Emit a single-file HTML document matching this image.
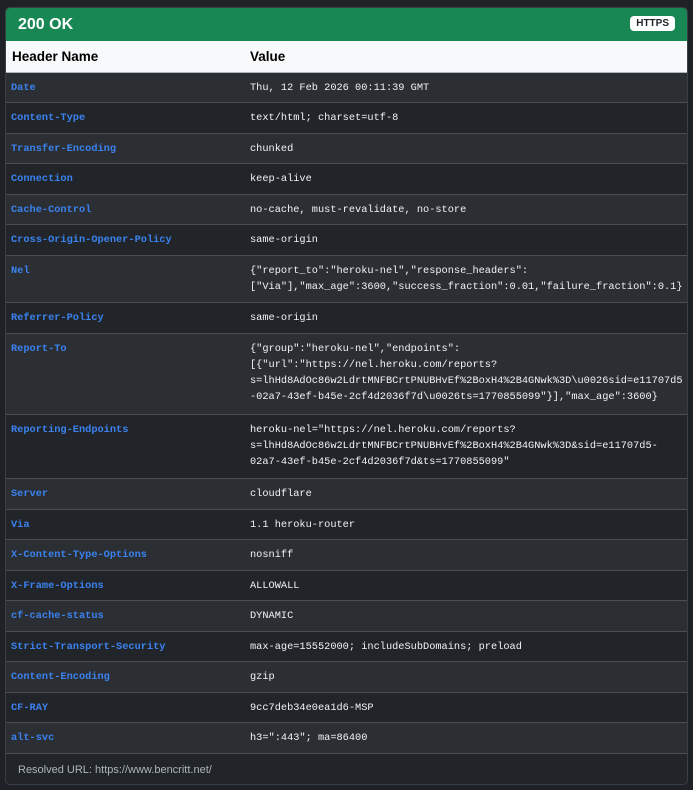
<!DOCTYPE html>
<html><head><meta charset="utf-8"><style>
body{margin:0;background:#1e2125;width:693px;height:790px;overflow:hidden;font-family:"Liberation Sans",sans-serif}
.card{position:absolute;left:5px;top:7px;width:683px;height:778px;background:#212529;border:1px solid #3a3f44;border-radius:5px;overflow:hidden;box-sizing:border-box}
.top{height:33px;background:#198754;color:#fff;font-weight:bold;font-size:16px;line-height:33px;padding-left:12px;position:relative}
.badge{position:absolute;right:12px;top:8px;background:#fff;color:#212529;font-size:10px;line-height:15px;padding:0 6px;border-radius:4px}
.th{height:32px;background:#f8f9fa;color:#000;font-weight:bold;font-size:13.5px;line-height:32px;position:relative;border-bottom:1px solid #adb5bd;box-sizing:border-box}
.th span{position:absolute}
.r{position:relative;border-bottom:1px solid #4a4f54;box-sizing:border-box;font-family:"Liberation Mono",monospace;font-size:10.3px;line-height:16px}
.r .n{position:absolute;left:5px;top:7px;color:#3b82f0;font-weight:bold}
.r .v{position:absolute;left:244px;top:7px;color:#f1f3f5;white-space:pre}
.a{background:#2b2f33}.b{background:#212529}
.foot{color:#adb5bd;font-size:11px;padding-left:12px;line-height:32px}
</style></head><body>
<div class="card">
<div class="top">200 OK<span class="badge">HTTPS</span></div>
<div class="th"><span style="left:6px">Header Name</span><span style="left:244px">Value</span></div>
<div class="r a" style="height:30px"><span class="n">Date</span><span class="v">Thu, 12 Feb 2026 00:11:39 GMT</span></div>
<div class="r b" style="height:31px"><span class="n">Content-Type</span><span class="v">text/html; charset=utf-8</span></div>
<div class="r a" style="height:30px"><span class="n">Transfer-Encoding</span><span class="v">chunked</span></div>
<div class="r b" style="height:31px"><span class="n">Connection</span><span class="v">keep-alive</span></div>
<div class="r a" style="height:30px"><span class="n">Cache-Control</span><span class="v">no-cache, must-revalidate, no-store</span></div>
<div class="r b" style="height:31px"><span class="n">Cross-Origin-Opener-Policy</span><span class="v">same-origin</span></div>
<div class="r a" style="height:47px"><span class="n">Nel</span><span class="v">{"report_to":"heroku-nel","response_headers":
["Via"],"max_age":3600,"success_fraction":0.01,"failure_fraction":0.1}</span></div>
<div class="r b" style="height:31px"><span class="n">Referrer-Policy</span><span class="v">same-origin</span></div>
<div class="r a" style="height:81px"><span class="n">Report-To</span><span class="v">{"group":"heroku-nel","endpoints":
[{"url":"https://nel.heroku.com/reports?
s=lhHd8AdOc86w2LdrtMNFBCrtPNUBHvEf%2BoxH4%2B4GNwk%3D\u0026sid=e11707d5
-02a7-43ef-b45e-2cf4d2036f7d\u0026ts=1770855099"}],"max_age":3600}</span></div>
<div class="r b" style="height:64px"><span class="n">Reporting-Endpoints</span><span class="v">heroku-nel="https://nel.heroku.com/reports?
s=lhHd8AdOc86w2LdrtMNFBCrtPNUBHvEf%2BoxH4%2B4GNwk%3D&amp;sid=e11707d5-
02a7-43ef-b45e-2cf4d2036f7d&amp;ts=1770855099"</span></div>
<div class="r a" style="height:31px"><span class="n">Server</span><span class="v">cloudflare</span></div>
<div class="r b" style="height:30px"><span class="n">Via</span><span class="v">1.1 heroku-router</span></div>
<div class="r a" style="height:31px"><span class="n">X-Content-Type-Options</span><span class="v">nosniff</span></div>
<div class="r b" style="height:30px"><span class="n">X-Frame-Options</span><span class="v">ALLOWALL</span></div>
<div class="r a" style="height:31px"><span class="n">cf-cache-status</span><span class="v">DYNAMIC</span></div>
<div class="r b" style="height:30px"><span class="n">Strict-Transport-Security</span><span class="v">max-age=15552000; includeSubDomains; preload</span></div>
<div class="r a" style="height:31px"><span class="n">Content-Encoding</span><span class="v">gzip</span></div>
<div class="r b" style="height:30px"><span class="n">CF-RAY</span><span class="v">9cc7deb34e0ea1d6-MSP</span></div>
<div class="r a" style="height:31px"><span class="n">alt-svc</span><span class="v">h3=":443"; ma=86400</span></div>
<div class="foot">Resolved URL: https://www.bencritt.net/</div>
</div>
</body></html>
